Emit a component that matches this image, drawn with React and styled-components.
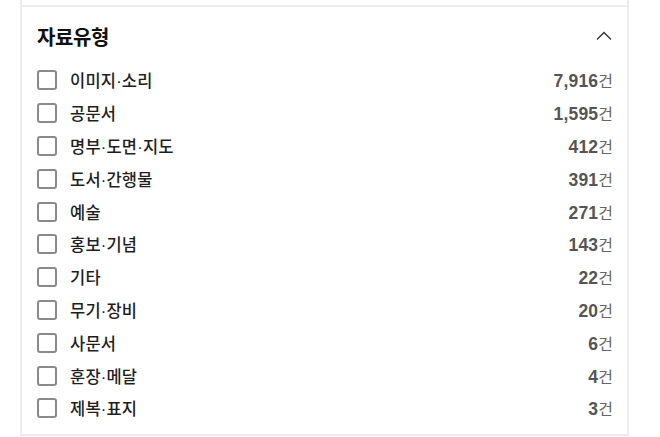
import React, { useState } from "react";
import styled, { createGlobalStyle } from "styled-components";

const GlobalStyle = createGlobalStyle`
  html, body {
    margin: 0;
    padding: 0;
    background: #fff;
  }
  body {
    font-family: "Noto Sans CJK KR", "Noto Sans", sans-serif;
  }
`;

const items = [
  { label: "이미지·소리", count: "7,916" },
  { label: "공문서", count: "1,595" },
  { label: "명부·도면·지도", count: "412" },
  { label: "도서·간행물", count: "391" },
  { label: "예술", count: "271" },
  { label: "홍보·기념", count: "143" },
  { label: "기타", count: "22" },
  { label: "무기·장비", count: "20" },
  { label: "사문서", count: "6" },
  { label: "훈장·메달", count: "4" },
  { label: "제복·표지", count: "3" },
];

const Page = styled.div`
  padding: 0 31px 0 20px;
  width: 660px;
  box-sizing: border-box;
`;

const Panel = styled.div`
  border-left: 2px solid #ececec;
  border-right: 2px solid #ececec;
  padding-top: 5px;
`;

const Section = styled.section`
  border-top: 2px solid #ececec;
  border-bottom: 2px solid #ececec;
  padding: 17px 14px 9px 15px;
`;

const Header = styled.div`
  display: flex;
  align-items: center;
  justify-content: space-between;
  height: 24px;
  margin-bottom: 16px;
  padding-right: 1px;
`;

const Title = styled.h3`
  margin: 0;
  font-size: 20px;
  font-weight: 700;
  color: #111;
  letter-spacing: -0.4px;
`;

const Toggle = styled.button`
  border: 0;
  background: none;
  padding: 0;
  width: 16px;
  height: 16px;
  display: flex;
  align-items: center;
  justify-content: center;
  cursor: pointer;
`;

const List = styled.ul`
  list-style: none;
  margin: 0;
  padding: 0;
`;

const Row = styled.li`
  display: flex;
  align-items: center;
  height: 32.8px;
`;

const Box = styled.span`
  width: 20px;
  height: 20px;
  box-sizing: border-box;
  border: 2px solid ${({ checked }) => (checked ? "#333" : "#8a8a8a")};
  border-radius: 3px;
  background: ${({ checked }) => (checked ? "#333" : "#fff")};
  margin-right: 13px;
  flex-shrink: 0;
`;

const Label = styled.label`
  flex: 1;
  font-family: "Liberation Sans", "Noto Sans CJK KR", sans-serif;
  font-size: 16.5px;
  font-weight: 500;
  color: #1e1e1e;
  cursor: pointer;
  letter-spacing: 0.2px;
`;

const Count = styled.span`
  font-size: 16px;
  color: #555;
  white-space: nowrap;
`;

const Num = styled.b`
  font-family: "Liberation Sans", Arial, sans-serif;
  font-weight: 700;
  font-size: 17.5px;
  letter-spacing: 0.2px;
`;

const Unit = styled.span`
  font-weight: 400;
  color: #666;
`;

const Chevron = () => (
  <svg width="16" height="10" viewBox="0 0 16 10" fill="none">
    <path d="M1 8.5L8 1.5L15 8.5" stroke="#333" strokeWidth="1.4" />
  </svg>
);

export default function App() {
  const [checked, setChecked] = useState({});
  return (
    <Page>
      <GlobalStyle />
      <Panel>
        <Section>
          <Header>
            <Title>자료유형</Title>
            <Toggle aria-label="접기">
              <Chevron />
            </Toggle>
          </Header>
          <List>
            {items.map((it) => (
              <Row
                key={it.label}
                onClick={() =>
                  setChecked((c) => ({ ...c, [it.label]: !c[it.label] }))
                }
              >
                <Box checked={checked[it.label]} />
                <Label>{it.label}</Label>
                <Count>
                  <Num>{it.count}</Num>
                  <Unit>건</Unit>
                </Count>
              </Row>
            ))}
          </List>
        </Section>
      </Panel>
    </Page>
  );
}
